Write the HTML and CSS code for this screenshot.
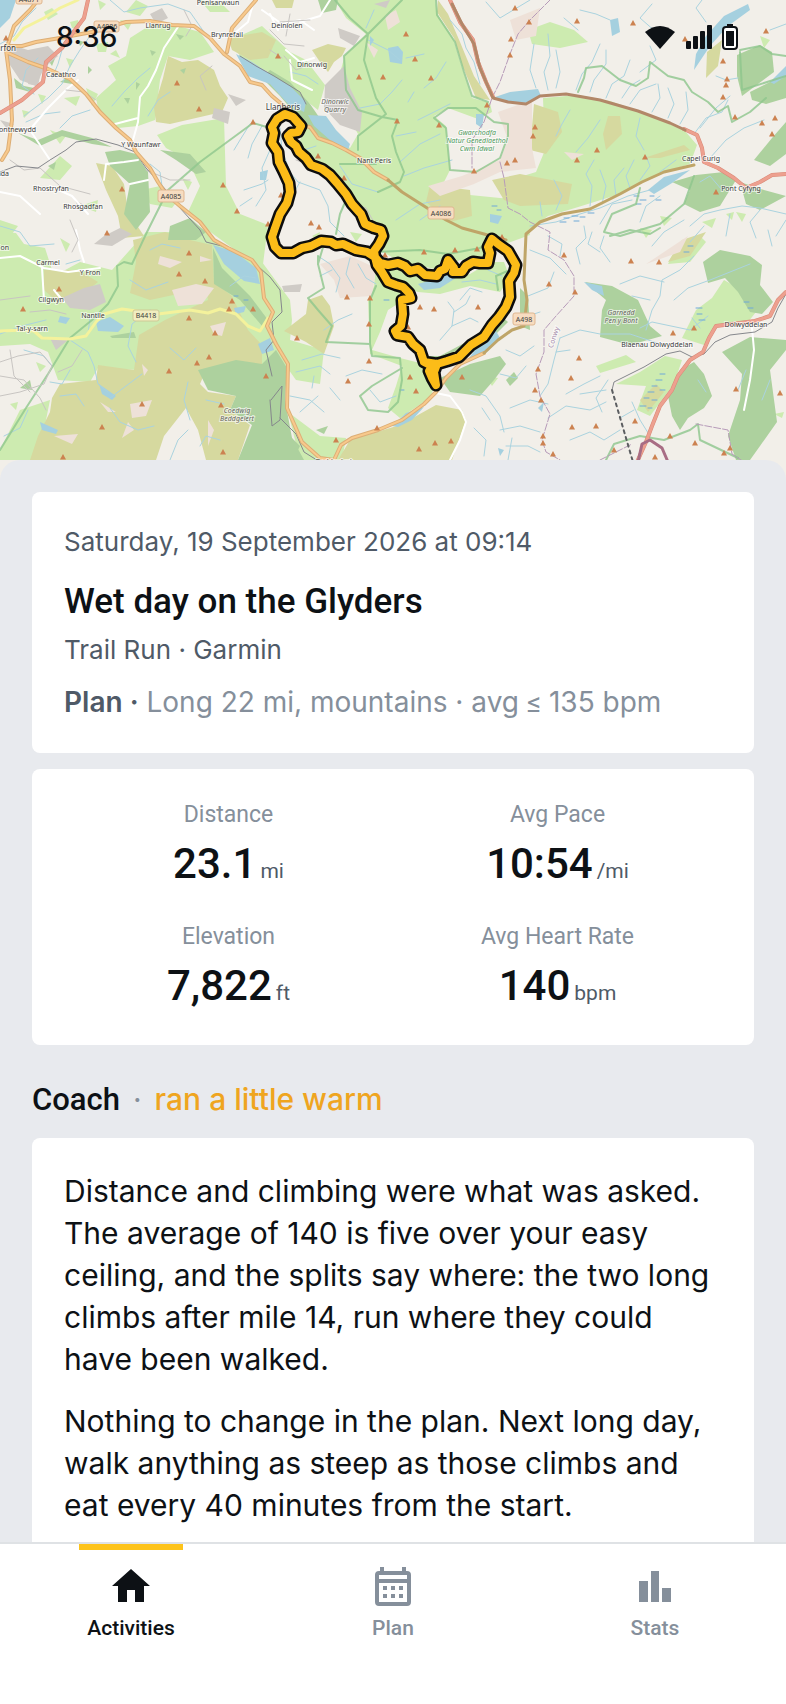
FILE: index.html
```html
<!DOCTYPE html>
<html lang="en">
<head>
<meta charset="UTF-8">
<meta name="viewport" content="width=device-width, initial-scale=1.0">
<title>Wet day on the Glyders</title>
<link rel="stylesheet" href="styles.css">
</head>
<body>
<div class="status-bar">
    <span>8:36</span>
    <svg class="status-icons" width="96" height="28" viewBox="644 23 96 28" aria-hidden="true">
        <path d="M645 32Q660 20 675 32L660 49Z"/>
        <rect x="686" y="41" width="5" height="8" rx="1"/>
        <rect x="693" y="36" width="5" height="13" rx="1"/>
        <rect x="700" y="31" width="5" height="18" rx="1"/>
        <rect x="707" y="25" width="5" height="24" rx="1"/>
        <path d="M727 24h6v3h-6z"/>
        <rect class="battery" x="723" y="27" width="14" height="22" rx="3"/>
        <rect x="726" y="31" width="8" height="15"/>
    </svg>
</div>

<main class="screen">
    <svg class="map" viewBox="0 0 786 480" preserveAspectRatio="xMidYMin slice" role="img" aria-label="Map of the run">
        <defs>
            <path id="peak" d="M-3 2.500L0 -3L3 2.500Z"/>
        </defs>

        <!-- land cover -->
        <g class="grass">
            <path d="M130 38L152 24L178 26L200 32L214 52L190 60L168 56L160 80L155 120L138 126L118 128L98 108L96 98L116 80L108 66L126 56Z"/>
            <path d="M157 135L182 125L224 118L226 186L240 214L268 225L262 272L235 250L205 228L188 212L200 186L188 160L166 148Z"/>
            <path d="M0 232L16 233L24 244L45 248L54 276L80 262L112 270L146 232L160 232L206 232L230 250L262 262L290 300L292 320L286 380L262 370L200 365L138 370L98 368L90 382L58 380L48 352L30 344L0 346Z"/>
            <path d="M335 0L435 0L438 15L453 38L462 68L472 98L490 103L492 112L478 119L448 108L434 116L446 126L450 170L440 190L470 195L520 200L530 235L500 246L486 262L460 260L440 270L400 262L380 250L378 236L352 204L326 172L302 150L300 140L310 120L350 148L358 134L346 112L338 80L345 55L366 34L346 18Z"/>
            <path d="M543 98L578 95L610 101L650 115L685 131L697 145L690 164L664 172L620 194L575 208L548 216L528 230L505 234L496 214L510 180L536 172L545 150Z"/>
            <path d="M230 40L262 26L290 52L306 60L325 85L318 110L300 96L280 78L260 68L240 56Z"/>
            <path d="M376 262L400 268L430 278L470 274L490 262L504 262L510 278L500 292L470 286L440 294L418 292L396 284L404 300L388 310L380 332L372 350L400 358L424 364L436 382L430 398L400 418L388 408L396 386L402 366L370 354L368 300L374 286Z"/>
            <path d="M266 338L290 340L324 350L320 384L296 380L286 366Z"/>
            <path d="M288 412L320 436L346 438L342 460L300 460Z"/>
            <path d="M724 280L745 292L756 312L748 322L716 326L704 345L682 338L696 310L712 298Z"/>
            <path d="M616 384L640 372L665 356L682 360L674 384L650 416L637 410L646 386Z"/>
            <path d="M596 366L626 355L636 362L600 373Z"/>
            <path d="M528 30L550 22L574 30L588 42L560 48L532 44Z"/>
            <path d="M20 410L50 400L44 430L34 460L0 460L0 450Z"/>
            <path d="M675 250L700 236L706 242L690 262L668 264Z"/>
            <path d="M136 0L148 6L140 16L126 12ZM200 0L222 4L230 12L210 12ZM50 130L66 136L60 144ZM64 98L80 96L76 106ZM40 178L60 156L72 166L60 180ZM86 88L98 94L92 106ZM188 150L206 160L200 172L184 162ZM142 190L160 186L178 200L172 208L150 204ZM80 206L98 200L96 212ZM0 220L18 226L12 234L0 234Z"/>
            <path d="M44 12L52 8L58 14L48 20ZM70 22L78 20L80 28L72 28ZM96 44L108 42L106 52L98 52ZM110 54L116 50L120 58ZM66 58L74 60L70 68ZM120 20L132 22L128 30ZM98 0L106 4L100 10ZM38 94L46 96L42 104ZM22 110L30 112L24 118ZM182 178L192 182L188 190ZM208 204L216 208L210 214ZM60 238L70 244L66 252ZM10 404L18 402L16 410ZM36 362L46 366L40 372ZM60 340L70 344L64 350Z"/>
            <path d="M640 228L652 230L646 238ZM660 216L672 218L664 226ZM702 222L716 218L712 228ZM736 212L746 214L742 222ZM760 36L770 40L764 48ZM726 214L734 212L732 220ZM486 376L498 378L492 386ZM774 414L784 412L782 418ZM350 232L362 234L356 242ZM312 236L320 232L318 240Z"/>
        </g>
        <g class="heath">
            <path d="M168 56L182 62L198 60L214 70L220 86L228 98L222 112L196 118L170 124L156 122L154 108L163 78Z"/>
            <path d="M96 163L112 166L124 184L128 212L144 236L122 238L118 216L106 190Z"/>
            <path d="M133 240L165 232L190 240L212 245L214 282L232 296L248 330L262 345L262 365L235 364L206 370L200 384L208 392L236 396L230 410L250 425L238 460L206 460L198 430L186 408L164 436L156 460L30 460L38 436L50 412L52 398L60 384L96 380L98 365L134 370L139 335L165 320L208 300L206 288L150 300L130 293L136 262Z"/>
            <path d="M44 270L78 270L98 282L80 296L60 304L44 290Z"/>
            <path d="M308 300L322 295L330 306L334 326L324 354L306 342L284 331L306 314Z"/>
            <path d="M350 440L400 425L436 405L462 410L466 420L452 460L338 460Z"/>
            <path d="M438 0L448 14L460 42L474 76L490 100L476 98L462 65L454 38L437 12Z"/>
            <path d="M312 50L328 44L346 48L342 56L334 62L328 72L320 62Z"/>
            <path d="M228 38L262 32L276 40L268 58L250 60L232 50Z"/>
            <path d="M430 185L470 190L472 216L450 222L426 202Z"/>
            <path d="M492 180L520 174L572 184L568 204L520 206L504 200Z"/>
            <path d="M534 104L558 112L562 132L546 154L530 150Z"/>
            <path d="M608 116L620 116L622 134L606 150L603 134Z"/>
            <path d="M644 158L684 145L690 150L660 158Z"/>
            <path d="M272 0L294 0L292 8L276 8Z"/>
            <path d="M707 52L722 40L718 66L706 78Z"/>
            <path d="M682 240L706 232L690 256L668 262Z"/>
            <path d="M640 400L656 384L664 392L648 412Z"/>
        </g>
        <g class="wood">
            <path d="M105 152L120 150L136 154L148 172L150 212L136 230L124 214L130 184L110 166Z"/>
            <path d="M213 248L222 268L250 296L268 320L262 326L240 300L214 284Z"/>
            <path d="M198 370L236 360L262 364L276 350L287 368L285 400L292 438L304 460L238 460L252 425L230 410L236 396L208 390Z"/>
            <path d="M318 0L338 0L336 10L322 13Z"/>
            <path d="M270 70L290 82L310 104L328 130L344 148L330 144L304 124L280 96L262 78Z"/>
            <path d="M424 356L440 356L470 340L500 315L508 322L484 346L452 362L436 366Z"/>
            <path d="M440 378L470 364L500 356L506 364L494 380L480 396L450 392Z"/>
            <path d="M585 282L612 286L638 300L650 326L662 336L630 345L600 337L602 310L606 300Z"/>
            <path d="M703 262L720 250L750 256L762 265L760 285L773 302L762 314L750 312L738 292L725 278L708 283Z"/>
            <path d="M668 396L680 370L694 362L704 374L712 396L704 408L688 418L680 430L672 416Z"/>
            <path d="M722 352L750 337L786 340L786 350L770 370L777 422L760 446L750 460L736 460L728 436L740 400L742 374Z"/>
            <path d="M737 55L760 45L772 52L774 72L758 84L742 96L737 76Z"/>
            <path d="M750 92L786 74L786 98L766 104L752 100Z"/>
            <path d="M672 182L696 175L724 172L736 180L720 206L700 212L684 204L690 190Z"/>
            <path d="M740 182L764 190L786 196L760 210L746 204Z"/>
            <path d="M786 122L772 138L754 160L770 166L786 154Z"/>
            <path d="M18 133L38 140L62 130L92 138L112 147L92 144L62 136L40 146Z"/>
            <path d="M170 226L190 218L206 232L196 240L168 240ZM60 82L70 76L72 84ZM110 336L134 332L136 338L112 338ZM20 388L30 380L32 390ZM160 150L190 154L206 172L196 174L176 160Z"/>
            <path d="M520 288L528 296L530 330L520 326ZM496 240L504 238L508 248L496 250Z"/>
            <path d="M50 50L56 56L52 66L48 60ZM14 78L24 86L34 88L30 92L16 88ZM78 40L84 42L80 46ZM88 66L92 70L88 74ZM150 50L156 52L152 56ZM176 34L184 36L180 40ZM48 166L56 162L54 170ZM180 70L186 68L184 74ZM124 98L130 98L128 104ZM136 82L140 84L136 90ZM344 36L350 34L348 40ZM290 436L300 446L296 454ZM316 430L328 426L324 434ZM506 380L514 372L518 378L510 386Z"/>
        </g>
        <g class="rock">
            <path d="M498 112L532 100L532 148L536 168L500 172L474 184L440 196L428 186L462 176L500 160L508 140Z"/>
            <path d="M320 264L350 256L376 268L372 296L340 298L334 280Z"/>
            <path d="M172 290L196 284L214 288L202 304L178 306ZM160 256L182 262L170 268L158 264ZM210 326L226 322L222 336L214 334ZM142 364L148 370L144 376ZM130 404L152 400L146 416L132 418ZM100 402L116 412L108 412ZM54 436L78 434L72 444ZM208 420L214 430L208 446ZM128 422L134 430L122 438ZM200 256L212 260L200 262Z"/>
            <path d="M385 16L396 10L400 22L388 30ZM366 42L378 50L374 58ZM510 20L540 8L536 36L516 40ZM646 264L688 236L680 252ZM564 152L584 154L572 160Z"/>
        </g>
        <g class="town">
            <path d="M8 44L28 50L48 46L58 56L44 68L36 86L20 80L8 62Z"/>
            <path d="M30 76L40 76L38 86L28 84ZM150 14L162 8L168 18L156 24ZM0 120L14 124L8 130ZM84 288L100 284L106 302L90 310L70 308L62 298ZM50 338L68 340L56 350ZM120 228L132 234L112 246L94 244L104 236ZM75 200L86 206L80 212Z"/>
            <path d="M325 85L344 66L350 88L362 112L360 132L340 125L324 108Z"/>
            <path d="M338 28L360 36L354 46L340 38ZM374 4L390 0L386 8ZM282 286L302 284L300 292L284 292ZM214 108L230 112L228 124L212 118ZM228 94L246 100L236 106Z"/>
        </g>

        <!-- lakes -->
        <g class="water">
            <path d="M0 0L16 0L10 18L0 28Z"/>
            <path d="M236 54L252 62L270 74L290 86L306 102L304 112L288 104L270 84L248 76Z"/>
            <path d="M308 115L326 116L336 130L350 144L348 150L330 140L314 126Z"/>
            <path d="M213 245L235 252L256 268L260 284L244 281L224 264Z"/>
            <path d="M388 48L398 46L403 52L402 64L390 62Z"/>
            <path d="M748 4L750 10L728 26L710 46L694 70L696 54L706 36L724 16Z"/>
            <path d="M492 98L510 92L538 89L541 96L528 103L504 102Z"/>
            <path d="M648 190L664 177L690 170L672 183L654 194Z"/>
            <path d="M418 284L432 280L448 272L458 262L462 266L456 278L440 288L424 290Z"/>
            <path d="M466 362L478 346L496 331L500 338L486 353Z"/>
            <path d="M392 426L406 413L424 407L412 420L398 427Z"/>
            <path d="M96 322L110 317L124 326L118 332L98 331ZM60 316L70 318L66 324L58 322ZM258 344L270 338L274 350L262 354ZM99 384L116 396L112 400L102 394ZM40 422L58 430L56 434L42 430Z"/>
            <path d="M476 114L484 114L482 128L476 124ZM490 214L502 216L498 224L490 222ZM584 282L602 286L604 296L592 290ZM610 20L618 18L620 32L612 36ZM370 36L374 40L370 46ZM260 172L268 170L266 180L260 180ZM538 408L544 402L542 412ZM234 308L246 306L244 312L236 314ZM498 448L504 450L500 456ZM770 82L786 66L786 76L774 84Z"/>
        </g>
        <g class="stream">
            <path d="M38 58L26 70L22 86L34 94M62 50L58 64L52 78M90 36L80 50L70 66L62 84L48 98L24 116M110 0L124 12L140 8L168 4L190 12L204 32L220 50M0 44L14 36L22 22L36 8M26 122L44 114L60 112M112 106L124 92L138 78L150 68M60 128L72 116L90 110M170 92L158 100L148 116M150 164L160 172L162 186M0 226L20 232L30 246L54 244M250 124L240 140L234 150M262 126L252 144L248 158M270 150L262 168L266 190L256 206M244 190L262 184L268 180M240 206L252 198"/>
            <path d="M280 128L282 150L290 172L298 182L320 190L328 206L330 222L344 236M298 152L316 146M300 182L292 196M318 84L306 76L290 72M368 40L388 50L400 60M406 58L424 54M360 108L380 104L392 92L402 80M414 92L408 102M418 120L434 112L450 104M400 162L420 144L440 134M404 176L424 168L452 160M396 136L416 132M446 62L436 78L424 88M374 10L366 28M450 20L462 34L466 48L474 62L480 84M530 0L500 18L486 2M396 220L420 204L440 200M420 220L440 206M340 166L352 184L378 192"/>
            <path d="M536 88L530 70L534 44M548 90L544 72L550 56L548 34M556 88L560 72L556 50M576 90L582 74L592 62L600 44M590 92L594 80L606 64L606 50M606 98L612 84L624 76L630 60M622 98L630 86L640 80M630 104L640 90L656 84M652 112L660 98L658 84M668 118L674 104L668 88M680 124L688 110L686 92M694 134L706 118L722 112L728 100M710 158L726 140L744 128L764 120M700 128L716 108L730 96M580 10L596 14L610 20M564 18L578 30M652 4L640 18L656 32M650 46L656 60L640 72M706 22L696 8L702 0M770 30L786 24M716 76L726 80L738 78"/>
            <path d="M570 110L562 124L556 136M600 120L588 138L576 152M640 118L636 136L644 150M590 206L592 186L586 174L594 160M602 204L606 186L600 170M616 196L614 180L624 168M630 188L626 176L634 160M556 210L562 196L554 180M542 216L540 202M660 172L676 160M640 180L650 166L646 156M700 182L710 176L722 190M530 226L556 222L580 214L600 208L628 196L650 190M600 224L612 204L632 200M640 222L646 206L660 196M690 226L704 214L720 210L742 206L760 208L786 214M726 236L730 214M756 238L750 222L760 210M776 236L786 220M772 246L768 230M690 242L704 226M652 246L664 232L684 220"/>
            <path d="M530 250L550 258L566 274M528 296L548 288L554 272M528 316L540 312M548 236L562 244L560 256M580 264L576 248L586 238L584 226M600 252L588 244L592 232M610 262L600 248L604 236M646 330L652 310L660 296L662 280L680 270L694 256M620 284L640 276L664 282M650 300L632 296M640 328L652 322L690 330L708 316M674 300L688 288L710 280L730 272L750 264M700 328L692 318M560 338L580 330L600 334L630 334L660 344M560 338L554 360L548 384L540 396M556 352L570 350M566 394L584 384L600 376M608 380L596 398L602 412M606 390L580 394M548 418L566 406L590 410L606 402M570 440L590 432L604 440L620 430M634 410L620 418M650 436L640 420L632 402M698 380L706 392M746 370L738 390M770 380L762 400"/>
            <path d="M150 310L132 324L128 346L136 362M80 260L66 264M46 320L22 326L0 334M70 340L88 352L94 366L98 384L108 392M110 398L126 386L142 374M110 408L120 422L138 430L154 426M190 420L184 400L188 382M170 460L178 440L188 430M200 446L206 436L220 440M170 348L184 360L196 348M230 286L244 276L256 278M60 396L76 394L84 406M4 436L20 428L28 410M206 400L224 404M24 350L44 356L52 366M88 334L90 318M130 280L146 290L168 282M150 250L162 244L180 248M70 370L62 384L50 382"/>
            <path d="M318 256L330 264L340 278L336 292M350 258L346 274L354 288M332 270L320 276M358 264L366 278L376 284M324 330L338 320L352 314M302 360L322 354L340 358M296 372L320 366L330 374M314 376L312 388M290 396L310 400L324 412M300 412L318 396M340 400L330 388M346 376L362 370L382 374M370 390L380 402L396 396M440 340L452 326L454 310L448 302M454 312L466 304L470 296M452 326L470 318L478 322M460 300L470 288L482 292M462 282L480 280L496 284M488 270L502 276M470 390L486 396L500 416L504 432M500 374L516 378L526 366M510 408L530 400L548 404M500 430L520 426L540 432M506 446L528 446L540 452M482 408L490 420M506 350L520 356L534 346M474 428L486 440L484 456M512 438L508 460"/>
        </g>
        <!-- wetland -->
        <g class="marsh">
            <path d="M564 218h5M572 216h6M580 217h5M588 213h6M560 222h6M574 221h5M634 196h5M640 200h6M636 204h5M650 196h4M656 200h5M660 374h5M656 380h6M652 386h5M660 390h5M648 392h6M644 398h5M652 400h5M640 406h6M648 408h4M696 308h6M697 314h5M699 320h6M744 302h5M748 308h5M688 246h5M684 252h5M492 206h5M497 210h4M234 296h4M244 300h4M384 300h5M400 390h4"/>
        </g>

        <!-- boundaries -->
        <g class="park">
            <path d="M0 450L26 408L48 374L70 338L92 320L108 304L118 286L117 266L124 262L132 264L147 232L168 190L200 162L253 123L270 128"/>
            <path d="M335 0L350 18L368 34L402 0M368 34L344 56L346 90L358 110L382 117L398 120L392 136L396 152L404 172L400 182L378 192M368 34L364 60L376 98L386 114L358 136L358 150"/>
            <path d="M436 0L437 15L455 42L464 72L472 96L488 102"/>
            <path d="M434 118L448 108L476 108L494 122L508 124L508 136L500 158L476 172L450 170L446 128Z"/>
            <path d="M578 92L584 78L586 68L602 66L620 80L636 86L648 78L650 62L668 76L684 80L692 92L708 102L718 112L728 106L732 122L750 112L766 98"/>
            <path d="M740 50L760 46L772 54L786 56M740 52L742 90L786 76M694 176L684 204L660 224L620 236L604 232L612 214L636 204L640 188"/>
            <path d="M318 256L318 264L324 288L308 298L318 310L332 326L326 342L370 344L372 356L400 358L402 380L398 402L388 412L368 410L360 396L372 386L402 368M376 286L370 300L370 344M376 252L420 250L448 254L480 248L490 240M510 270L496 276L498 290"/>
            <path d="M336 234L340 214L346 200M376 164L340 164M318 264L324 244"/>
            <path d="M606 460L614 444L640 436L664 440L690 430L698 424L700 440L738 458M610 236L630 230L650 234L660 228"/>
        </g>
        <g class="county">
            <path d="M550 0L530 20L518 34L510 54L500 82L492 98L484 122L472 140L472 168M500 162L504 178L508 208L520 214L530 222L550 232L548 250L564 260L574 276L574 296L556 316L544 330L544 352L536 374L540 396L550 414L542 440L546 452L560 460M600 460L632 444M696 424L728 430L732 454L744 462"/>
        </g>

        <!-- roads and rail -->
        <g class="lane">
            <path d="M178 27L164 48L156 70L148 86L140 97L138 122L133 140M115 124L138 118M33 126L48 108L68 88L78 80M0 258L20 256L44 268L68 272L100 268M44 300L42 268M54 290L64 302M104 180L106 164L124 162L138 160M130 184L148 180M436 393L450 396L462 412L466 422L460 440L450 460M286 50L300 62L314 58M262 10L282 24L300 20L314 30M290 60L292 80L312 90M752 328L754 350L750 380L744 410M76 230L80 250L84 262M236 32L248 22L254 0M30 130L50 160M0 192L20 196L40 214M50 186L72 196L88 214M330 0L320 16L300 22M278 30L270 14"/>
        </g>
        <g class="path">
            <path d="M0 396L20 392L44 384L52 366L40 352L18 356L0 362M0 376L24 380L40 398L46 410M10 350L14 376L30 392M82 350L72 366L58 372M146 170L170 180L190 180M10 160L24 170L40 168L60 186L90 194M66 90L84 92L96 100M30 312L50 310L66 314M0 300L30 296M70 220L78 240L72 252M184 10L192 26L186 36M212 66L200 76L206 90M270 30L284 44L304 46M290 14L286 36M280 22L310 20M284 56L296 70L306 66M270 50L282 58M296 160L312 166M352 204L366 208L376 226"/>
        </g>
        <g class="yellow-road">
            <path d="M14 40L24 28L44 18L60 8L78 0M0 331L24 330L34 331L42 338L70 339L86 336L96 322L104 314L122 309L158 314L190 310L208 313L220 309L236 314L248 326L260 331L268 318"/>
        </g>
        <g class="rail">
            <path d="M0 172L16 166L38 168L50 160L66 150L76 142L96 139L118 145L135 152L146 168L166 190L180 208L200 230L206 242L222 246L250 259L270 277L280 290L282 312L272 322L274 340L266 350L272 376M240 56L256 66L274 76L300 92L306 104M271 400L282 386L280 420L272 426L270 400M280 418L296 434L304 452L320 462"/>
            <path d="M786 294L778 308L772 322L755 332L730 335L715 342L704 354L692 357L680 351L666 354L644 367L614 382L612 390"/>
        </g>
        <path class="tunnel" d="M612 390L633 462"/>
        <g class="road casing">
            <path d="M2 160L8 150L12 120L10 80L6 50L14 26L30 10L38 0M6 46L22 46L36 42L60 38L92 32L126 22L150 21L172 25L194 26L210 38L224 54L240 66L250 82L262 85L272 96L284 106L300 126L310 127L318 138L332 143L346 150L360 158L374 172L388 180M8 53L28 62L48 69L70 79L86 94L100 112L116 128L130 140L136 152L150 168L158 182L166 194L180 206L200 222L214 240L228 248L252 260L261 272L264 298L273 312L267 326L276 344L288 364L287 408L302 442L320 458L334 460L341 445L352 438L378 430L402 420L424 404L436 392L446 378L460 364L484 353M256 0L244 14L232 28L227 52"/>
        </g>
        <g class="road">
            <path d="M2 160L8 150L12 120L10 80L6 50L14 26L30 10L38 0M6 46L22 46L36 42L60 38L92 32L126 22L150 21L172 25L194 26L210 38L224 54L240 66L250 82L262 85L272 96L284 106L300 126L310 127L318 138L332 143L346 150L360 158L374 172L388 180M8 53L28 62L48 69L70 79L86 94L100 112L116 128L130 140L136 152L150 168L158 182L166 194L180 206L200 222L214 240L228 248L252 260L261 272L264 298L273 312L267 326L276 344L288 364L287 408L302 442L320 458L334 460L341 445L352 438L378 430L402 420L424 404L436 392L446 378L460 364L484 353M256 0L244 14L232 28L227 52"/>
        </g>
        <g class="park-road">
            <path d="M388 180L402 192L424 206L446 220L462 228L484 234L506 240M484 353L498 340L512 330L524 326L527 300L524 280L526 234L540 222L562 214L590 209L620 194L642 182L664 172L694 165"/>
        </g>
        <g class="red-road casing">
            <path d="M88 0L84 18L72 34L62 48L46 62L43 82L22 100L0 113M450 0L460 22L473 40L478 62L486 82L493 97M684 129L697 135L702 148L704 162L718 168L734 178L746 188L760 182L772 175L786 174M786 292L778 300L770 316L755 321L716 326L709 338L703 352L690 360L678 376L672 390L660 406L652 426L646 442L637 462"/>
        </g>
        <g class="red-road">
            <path d="M88 0L84 18L72 34L62 48L46 62L43 82L22 100L0 113M450 0L460 22L473 40L478 62L486 82L493 97M684 129L697 135L702 148L704 162L718 168L734 178L746 188L760 182L772 175L786 174M786 292L778 300L770 316L755 321L716 326L709 338L703 352L690 360L678 376L672 390L660 406L652 426L646 442L637 462"/>
        </g>
        <path class="a5" d="M452 4L462 24L474 44L480 68L493 98L508 102L526 104L540 96L566 94L600 100L638 111L670 123L685 130"/>
        <path class="border-road" d="M638 462L642 444L650 440L662 448L668 462"/>

        <!-- summits -->
        <g class="peaks">
            <use href="#peak" x="177" y="83"/><use href="#peak" x="199" y="109"/><use href="#peak" x="253" y="122"/><use href="#peak" x="122" y="189"/><use href="#peak" x="223" y="185"/><use href="#peak" x="237" y="211"/><use href="#peak" x="107" y="233"/><use href="#peak" x="6" y="38"/>
            <use href="#peak" x="278" y="56"/><use href="#peak" x="406" y="34"/><use href="#peak" x="415" y="59"/><use href="#peak" x="359" y="77"/><use href="#peak" x="383" y="77"/><use href="#peak" x="431" y="78"/><use href="#peak" x="397" y="121"/><use href="#peak" x="439" y="125"/><use href="#peak" x="474" y="171"/><use href="#peak" x="507" y="163"/><use href="#peak" x="515" y="160"/><use href="#peak" x="515" y="8"/><use href="#peak" x="511" y="39"/><use href="#peak" x="510" y="55"/><use href="#peak" x="318" y="156"/><use href="#peak" x="344" y="178"/><use href="#peak" x="268" y="224"/><use href="#peak" x="311" y="223"/><use href="#peak" x="319" y="227"/><use href="#peak" x="281" y="195"/><use href="#peak" x="487" y="105"/>
            <use href="#peak" x="529" y="22"/><use href="#peak" x="577" y="21"/><use href="#peak" x="633" y="23"/><use href="#peak" x="685" y="39"/><use href="#peak" x="766" y="31"/><use href="#peak" x="723" y="61"/><use href="#peak" x="727" y="79"/><use href="#peak" x="726" y="85"/><use href="#peak" x="723" y="97"/><use href="#peak" x="735" y="117"/><use href="#peak" x="762" y="123"/><use href="#peak" x="775" y="118"/><use href="#peak" x="772" y="134"/><use href="#peak" x="535" y="127"/><use href="#peak" x="533" y="136"/><use href="#peak" x="577" y="160"/><use href="#peak" x="597" y="150"/><use href="#peak" x="645" y="157"/><use href="#peak" x="716" y="192"/>
            <use href="#peak" x="59" y="289"/><use href="#peak" x="23" y="309"/><use href="#peak" x="189" y="253"/><use href="#peak" x="179" y="274"/><use href="#peak" x="205" y="281"/><use href="#peak" x="189" y="318"/><use href="#peak" x="232" y="301"/><use href="#peak" x="229" y="309"/><use href="#peak" x="253" y="309"/><use href="#peak" x="215" y="333"/><use href="#peak" x="209" y="357"/><use href="#peak" x="197" y="363"/><use href="#peak" x="169" y="371"/><use href="#peak" x="142" y="404"/><use href="#peak" x="221" y="405"/><use href="#peak" x="102" y="427"/><use href="#peak" x="223" y="452"/><use href="#peak" x="63" y="457"/><use href="#peak" x="266" y="376"/>
            <use href="#peak" x="347" y="297"/><use href="#peak" x="370" y="298"/><use href="#peak" x="297" y="338"/><use href="#peak" x="369" y="324"/><use href="#peak" x="369" y="361"/><use href="#peak" x="348" y="381"/><use href="#peak" x="410" y="377"/><use href="#peak" x="416" y="391"/><use href="#peak" x="377" y="428"/><use href="#peak" x="336" y="440"/><use href="#peak" x="419" y="449"/><use href="#peak" x="435" y="443"/><use href="#peak" x="451" y="441"/><use href="#peak" x="462" y="377"/><use href="#peak" x="420" y="307"/><use href="#peak" x="434" y="309"/><use href="#peak" x="478" y="307"/><use href="#peak" x="408" y="327"/><use href="#peak" x="424" y="252"/><use href="#peak" x="455" y="250"/><use href="#peak" x="477" y="249"/><use href="#peak" x="502" y="237"/><use href="#peak" x="385" y="255"/>
            <use href="#peak" x="564" y="255"/><use href="#peak" x="631" y="261"/><use href="#peak" x="659" y="262"/><use href="#peak" x="549" y="284"/><use href="#peak" x="575" y="292"/><use href="#peak" x="673" y="333"/><use href="#peak" x="694" y="328"/><use href="#peak" x="579" y="358"/><use href="#peak" x="571" y="378"/><use href="#peak" x="538" y="369"/><use href="#peak" x="535" y="390"/><use href="#peak" x="541" y="400"/><use href="#peak" x="572" y="427"/><use href="#peak" x="596" y="426"/><use href="#peak" x="635" y="421"/><use href="#peak" x="543" y="436"/><use href="#peak" x="543" y="443"/><use href="#peak" x="553" y="454"/><use href="#peak" x="614" y="450"/><use href="#peak" x="670" y="436"/><use href="#peak" x="695" y="443"/><use href="#peak" x="730" y="448"/><use href="#peak" x="724" y="453"/><use href="#peak" x="736" y="389"/><use href="#peak" x="780" y="393"/><use href="#peak" x="655" y="457"/>
        </g>

        <!-- road shields -->
        <g class="shields">
            <rect x="16" y="-8" width="26" height="12" rx="2"/>
            <rect x="94" y="21" width="25" height="11" rx="2"/>
            <rect x="158" y="190" width="26" height="12" rx="2"/>
            <rect x="428" y="207" width="26" height="12" rx="2"/>
            <rect x="513" y="313" width="22" height="12" rx="2"/>
            <rect class="shield-yellow" x="133" y="310" width="26" height="11" rx="2"/>
        </g>
        <g class="labels">
            <text class="shield-text" x="29" y="2">A4871</text>
            <text class="shield-text" x="107" y="29">A4086</text>
            <text class="shield-text" x="171" y="199">A4085</text>
            <text class="shield-text" x="441" y="216">A4086</text>
            <text class="shield-text" x="524" y="322">A498</text>
            <text class="shield-text" x="146" y="318">B4418</text>
            <text x="158" y="28">Llanrug</text>
            <text x="218" y="5">Penisarwaun</text>
            <text x="227" y="37">Brynrefail</text>
            <text x="61" y="77">Caeathro</text>
            <text class="end town-name" x="16" y="51">Caernarfon</text>
            <text class="end" x="36" y="132">Bontnewydd</text>
            <text x="141" y="147">Y Waunfawr</text>
            <text class="end" x="9" y="176">Llanwnda</text>
            <text x="51" y="191">Rhostryfan</text>
            <text x="83" y="209">Rhosgadfan</text>
            <text x="287" y="28">Deiniolen</text>
            <text x="312" y="67">Dinorwig</text>
            <text class="area" x="335" y="104">Dinorwic</text>
            <text class="area" x="335" y="112">Quarry</text>
            <text class="town-name" x="283" y="110">Llanberis</text>
            <text x="374" y="163">Nant Peris</text>
            <text class="reserve" x="477" y="135">Gwarchodfa</text>
            <text class="reserve" x="477" y="143">Natur Genedlaethol</text>
            <text class="reserve" x="477" y="151">Cwm Idwal</text>
            <text x="701" y="161">Capel Curig</text>
            <text x="741" y="191">Pont Cyfyng</text>
            <text class="end" x="9" y="250">Pilon</text>
            <text x="48" y="265">Carmel</text>
            <text x="90" y="275">Y Fron</text>
            <text x="51" y="302">Cilgwyn</text>
            <text x="93" y="318">Nantlle</text>
            <text x="32" y="331">Tal-y-sarn</text>
            <text class="area" x="237" y="413">Coedwig</text>
            <text class="area" x="237" y="421">Beddgelert</text>
            <text x="334" y="464">Beddgelert</text>
            <text class="area" x="621" y="315">Garnedd</text>
            <text class="area" x="621" y="323">Pen y Bont</text>
            <text x="657" y="347">Blaenau Dolwyddelan</text>
            <text x="746" y="327">Dolwyddelan</text>
            <text class="county-name" transform="translate(556 338) rotate(-72)">Conwy</text>
        </g>

        <!-- recorded track, drawn twice for the outline -->
        <g class="track track-outline">
            <path d="M375 257L374 251L379 244L383 236L381 230L374 228L365 224L361 214L352 204L346 194L337 183L330 175L322 169L311 165L306 158L299 152L296 146L291 142L288 136L291 133L298 132L301 126L293 117L285 114L277 119L272 127L274 133L272 143L278 152L279 162L284 172L289 183L290 192L287 203L280 214L275 228L272 237L275 247L281 253L293 253L302 248L311 246L321 241L331 242L336 245L343 244L356 250L367 252L375 257L380 263L388 265L398 263L405 266L410 271L418 269L425 275L437 276L440 271L445 269L448 260L454 268L453 272L462 272L466 266L473 262L480 263L488 263L490 253L488 247L492 239L498 244L508 251L516 265L514 273L509 281L510 297L506 307L499 317L492 325L484 337L471 345L459 357L447 361L437 364L424 362L420 350L413 344L408 337L397 335L395 331L401 326L403 314L402 300L411 298L409 293L403 287L396 285L388 282L382 272L377 265L375 257M424 362L432 366L429 371L432 378L436 385L434 372L437 364"/>
        </g>
        <g class="track">
            <path d="M375 257L374 251L379 244L383 236L381 230L374 228L365 224L361 214L352 204L346 194L337 183L330 175L322 169L311 165L306 158L299 152L296 146L291 142L288 136L291 133L298 132L301 126L293 117L285 114L277 119L272 127L274 133L272 143L278 152L279 162L284 172L289 183L290 192L287 203L280 214L275 228L272 237L275 247L281 253L293 253L302 248L311 246L321 241L331 242L336 245L343 244L356 250L367 252L375 257L380 263L388 265L398 263L405 266L410 271L418 269L425 275L437 276L440 271L445 269L448 260L454 268L453 272L462 272L466 266L473 262L480 263L488 263L490 253L488 247L492 239L498 244L508 251L516 265L514 273L509 281L510 297L506 307L499 317L492 325L484 337L471 345L459 357L447 361L437 364L424 362L420 350L413 344L408 337L397 335L395 331L401 326L403 314L402 300L411 298L409 293L403 287L396 285L388 282L382 272L377 265L375 257M424 362L432 366L429 371L432 378L436 385L434 372L437 364"/>
        </g>
    </svg>

    <div class="sheet">
        <section class="card">
            <p class="meta">Saturday, 19 September 2026 at 09:14</p>
            <h1>Wet day on the Glyders</h1>
            <p class="meta">Trail Run · Garmin</p>
            <p class="plan"><strong>Plan ·</strong> Long 22 mi, mountains · avg <span class="sign">≤</span> 135 bpm</p>
        </section>

        <dl class="card stats">
            <div class="stat">
                <dt>Distance</dt>
                <dd>23.1<span class="unit">mi</span></dd>
            </div>
            <div class="stat">
                <dt>Avg Pace</dt>
                <dd>10:54<span class="unit">/mi</span></dd>
            </div>
            <div class="stat">
                <dt>Elevation</dt>
                <dd>7,822<span class="unit">ft</span></dd>
            </div>
            <div class="stat">
                <dt>Avg Heart Rate</dt>
                <dd>140<span class="unit">bpm</span></dd>
            </div>
        </dl>

        <div class="coach-heading">
            <h2>Coach</h2>
            <span class="dot">·</span>
            <span class="verdict">ran a little warm</span>
        </div>
        <section class="card coach">
            <p>Distance and climbing were what was asked. The average of 140 is five over your easy ceiling, and the splits say where: the two long climbs after mile 14, run where they could have been walked.</p>
            <p>Nothing to change in the plan. Next long day, walk anything as steep as those climbs and eat every 40 minutes from the start.</p>
        </section>
    </div>
</main>

<nav class="tabs">
    <a class="tab active" href="#activities">
        <svg width="48" height="48" viewBox="0 0 48 48" aria-hidden="true"><path d="M24 5L5 22H11V38H20V26H28V38H37V22H43Z"/></svg>
        Activities
    </a>
    <a class="tab" href="#plan">
        <svg width="48" height="48" viewBox="0 0 48 48" aria-hidden="true">
            <path fill-rule="evenodd" d="M11 3h4v4h18V3h4v4h1a4 4 0 0 1 4 4v27a4 4 0 0 1-4 4H10a4 4 0 0 1-4-4V11a4 4 0 0 1 4-4h1zM10 11v4h28v-4zM10 19v19h28V19z"/>
            <path d="M14 22h4v4h-4zM22 22h4v4h-4zM30 22h4v4h-4zM14 30h4v4h-4zM22 30h4v4h-4zM30 30h4v4h-4z"/>
        </svg>
        Plan
    </a>
    <a class="tab" href="#stats">
        <svg width="48" height="48" viewBox="0 0 48 48" aria-hidden="true"><path d="M8 17h9v21H8zM20 7h8v31h-8zM31 24h9v14h-9z"/></svg>
        Stats
    </a>
</nav>
</body>
</html>
```

FILE: styles.css
```css
* {
    box-sizing: border-box;
}

body {
    display: flex;
    flex-direction: column;
    height: 100vh;
    margin: 0;
    background-color: #e8eaee;
    color: #0d1115;
    font-family: Inter, "Noto Sans", sans-serif;
}

h1, h2, p, dl, dd {
    margin: 0;
}

/* status bar */
.status-bar {
    position: absolute;
    top: 0;
    left: 0;
    right: 0;
    z-index: 2;
    display: flex;
    justify-content: space-between;
    align-items: center;
    padding: 20px 46px 0 56px;
    font-size: 28px;
    font-weight: 500;
    line-height: 34px;
}

.status-icons {
    fill: #0d1115;
}

.status-icons .battery {
    fill: #fff;
    stroke: #0d1115;
    stroke-width: 2;
}

/* scrolling screen */
.screen {
    flex: 1;
    min-height: 0;
    overflow-y: auto;
    scrollbar-width: none;
}

.sheet {
    position: relative;
    margin-top: -20px;
    padding: 32px;
    background-color: #e8eaee;
    border-radius: 20px 20px 0 0;
}

.card {
    padding: 32px;
    background-color: #fff;
    border-radius: 8px;
}

.meta {
    color: #4f5a67;
    font-size: 26px;
    line-height: 36px;
}

h1 {
    margin: 20px 0 8px;
    font-family: Roboto, sans-serif;
    font-size: 35px;
    font-weight: 500;
    line-height: 44px;
}

.plan {
    margin-top: 16px;
    color: #858f9b;
    font-size: 28px;
    line-height: 36px;
}

.plan strong {
    color: #4f5a67;
    font-weight: 600;
}

.plan .sign {
    font-family: Roboto, sans-serif;
}

/* stats */
.stats {
    display: grid;
    grid-template-columns: 1fr 1fr;
    row-gap: 32px;
    margin-top: 16px;
    font-family: Roboto, sans-serif;
    text-align: center;
}

.stat dt {
    color: #858f9b;
    font-size: 23px;
    line-height: 28px;
}

.stat dd {
    display: flex;
    justify-content: center;
    align-items: baseline;
    gap: 4px;
    margin-top: 8px;
    font-size: 42px;
    font-weight: 500;
    line-height: 54px;
}

.unit {
    color: #4f5a67;
    font-size: 21px;
    font-weight: 400;
    line-height: 28px;
}

/* coach */
.coach-heading {
    display: flex;
    align-items: baseline;
    gap: 13px;
    padding: 32px 0 16px;
    font-size: 30px;
    line-height: 44px;
}

h2 {
    font-family: Roboto, sans-serif;
    font-size: 31px;
    font-weight: 500;
    line-height: 44px;
}

.dot {
    color: #858f9b;
}

.verdict {
    color: #efa51f;
    font-weight: 500;
}

.coach {
    font-size: 30px;
    line-height: 42px;
}

.coach p + p {
    margin-top: 20px;
}

/* tab bar */
.tabs {
    display: flex;
    background-color: #fff;
    border-top: 2px solid #dfe2e5;
}

.tab {
    position: relative;
    flex: 1;
    display: flex;
    flex-direction: column;
    align-items: center;
    gap: 2px;
    padding: 20px 0 62px;
    color: #858f9b;
    fill: #858f9b;
    font-family: Roboto, sans-serif;
    font-size: 21px;
    font-weight: 500;
    line-height: 28px;
    text-decoration: none;
}

.tab.active {
    color: #0d1115;
    fill: #0d1115;
}

.tab.active::before {
    content: "";
    position: absolute;
    top: 0;
    left: 30%;
    width: 40%;
    height: 6px;
    background-color: #fdc31b;
}

/* map */
.map {
    display: block;
    width: 100%;
    height: 480px;
    background-color: #f2efe9;
}

.map path {
    stroke-linejoin: round;
    stroke-linecap: round;
}

.grass { fill: #cdebb0; }
.heath { fill: #d6d99f; }
.wood { fill: #add19e; }
.rock { fill: #eee1d8; }
.town { fill: #cfcbc6; }
.water { fill: #a5d0df; }

.stream, .marsh, .park, .county, .lane, .path, .yellow-road, .rail,
.road, .park-road, .red-road, .tunnel, .a5, .border-road, .track {
    fill: none;
}

.stream { stroke: #aad3df; stroke-width: 1; }
.marsh { stroke: #6fa9d8; stroke-width: 1; }
.park { stroke: #8ec78d; stroke-width: 2; opacity: 0.8; }
.county { stroke: #b79bb9; stroke-width: 1; stroke-dasharray: 7 2; }
.lane { stroke: #fff; stroke-width: 2; }
.path { stroke: #c8c5c2; stroke-width: 1; }
.yellow-road { stroke: #f4f29c; stroke-width: 3; }
.rail { stroke: #85878c; stroke-width: 1; }
.tunnel { stroke: #5c5e61; stroke-width: 2; stroke-dasharray: 3 4; }
.road { stroke: #f8c98c; stroke-width: 2; }
.road.casing { stroke: #dcae76; stroke-width: 4; }
.park-road { stroke: #bfa568; stroke-width: 3; }
.red-road { stroke: #eda08f; stroke-width: 3; }
.red-road.casing { stroke: #d98876; stroke-width: 4; }
.a5 { stroke: #b28768; stroke-width: 3; }
.border-road { stroke: #a86d84; stroke-width: 3; }
.peaks { fill: #cc8250; }

.shields rect {
    fill: #f7dcc0;
    stroke: #dfb791;
}

.shields .shield-yellow {
    fill: #f1edc0;
    stroke: #cfca95;
}

.labels text {
    fill: #3c3c3c;
    stroke: #fff;
    stroke-opacity: 0.6;
    stroke-width: 2px;
    paint-order: stroke;
    font-family: "Noto Sans", sans-serif;
    font-size: 7px;
    text-anchor: middle;
}

.labels .end {
    text-anchor: end;
}

.labels .town-name {
    font-size: 8px;
}

.labels .shield-text {
    stroke: none;
}

.labels .area {
    fill: #66665c;
    font-style: italic;
}

.labels .reserve {
    fill: #4f9a5c;
    font-style: italic;
}

.labels .county-name {
    fill: #a48aab;
}

.track {
    stroke: #fcbc18;
    stroke-width: 8;
}

.track-outline {
    stroke: #0d0d0d;
    stroke-width: 13;
}
```
